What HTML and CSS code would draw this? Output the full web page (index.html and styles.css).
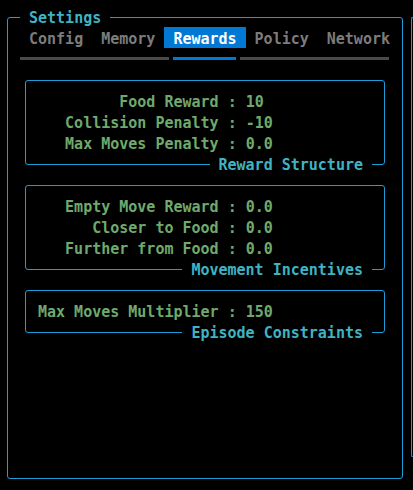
FILE: index.html
```html
<!DOCTYPE html>
<html lang="en">
<head>
    <meta charset="UTF-8">
    <meta name="viewport" content="width=device-width, initial-scale=1.0">
    <title>Settings</title>
    <link rel="stylesheet" href="styles.css">
</head>
<body>
    <div class="screen">
        <section class="panel">
            <span class="panel-title">Settings</span>

            <nav class="tabs">
                <span class="tab">Config</span>
                <span class="tab">Memory</span>
                <span class="tab active">Rewards</span>
                <span class="tab">Policy</span>
                <span class="tab">Network</span>
            </nav>
            <div class="tab-underline">
                <span class="bar left"></span>
                <span class="bar active"></span>
                <span class="bar right"></span>
            </div>

            <div class="group">
                <div class="row"><span class="key">Food Reward</span> : 10</div>
                <div class="row"><span class="key">Collision Penalty</span> : -10</div>
                <div class="row"><span class="key">Max Moves Penalty</span> : 0.0</div>
                <span class="group-title">Reward Structure</span>
            </div>

            <div class="group">
                <div class="row"><span class="key">Empty Move Reward</span> : 0.0</div>
                <div class="row"><span class="key">Closer to Food</span> : 0.0</div>
                <div class="row"><span class="key">Further from Food</span> : 0.0</div>
                <span class="group-title">Movement Incentives</span>
            </div>

            <div class="group">
                <div class="row"><span class="key">Max Moves Multiplier</span> : 150</div>
                <span class="group-title">Episode Constraints</span>
            </div>
        </section>

        <section class="panel side"></section>
    </div>
</body>
</html>
```

FILE: styles.css
```css
html, body {
    margin: 0;
    padding: 0;
    background-color: #000;
    overflow: hidden;
}
body {
    font-family: "DejaVu Sans Mono", "Liberation Mono", monospace;
    font-size: 15px;
    font-weight: bold;
    line-height: 21px;
}
.screen {
    display: flex;
    align-items: flex-start;
    width: 413px;
    box-sizing: border-box;
    padding: 17px 0 0 7px;
}
.panel {
    position: relative;
    flex: none;
    box-sizing: border-box;
    width: 396px;
    height: 462px;
    border: 1px solid #1c9cd8;
    border-radius: 3px;
    padding: 9px 0 0 12px;
}
.panel.side {
    flex: 1;
    width: auto;
    min-width: 0;
    height: 440px;
    margin-left: 8px;
    padding: 0;
    border-right: none;
    border-radius: 3px 0 0 3px;
}
.panel-title {
    position: absolute;
    top: -10px;
    left: 12px;
    padding: 0 9px;
    background-color: #000;
    color: #3fb3c3;
}
.tabs {
    display: flex;
    height: 21px;
}
.tab {
    padding: 3px 9px 0;
    line-height: 18px;
    color: #7c7c7c;
    white-space: pre;
}
.tab.active {
    background-color: #0178d4;
    color: #fff;
}
.tab-underline {
    display: flex;
    height: 3px;
    margin: 9px 0 20px;
}
.bar {
    height: 3px;
    background-color: #4a4a4a;
}
.bar.left {
    width: 149px;
}
.bar.active {
    width: 63px;
    margin: 0 4px;
    background-color: #0178d4;
}
.bar.right {
    width: 149px;
}
.group {
    position: relative;
    box-sizing: border-box;
    width: 360px;
    margin: 0 0 20px 5px;
    padding: 11px 12px 9px;
    border: 1px solid #1c9cd8;
    border-radius: 3px;
    color: #6fa96d;
}
.row {
    white-space: pre;
}
.key {
    display: inline-block;
    width: 20ch;
    text-align: right;
}
.group-title {
    position: absolute;
    right: 12px;
    bottom: -12px;
    padding: 0 9px;
    background-color: #000;
    color: #3fb3c3;
}
```
